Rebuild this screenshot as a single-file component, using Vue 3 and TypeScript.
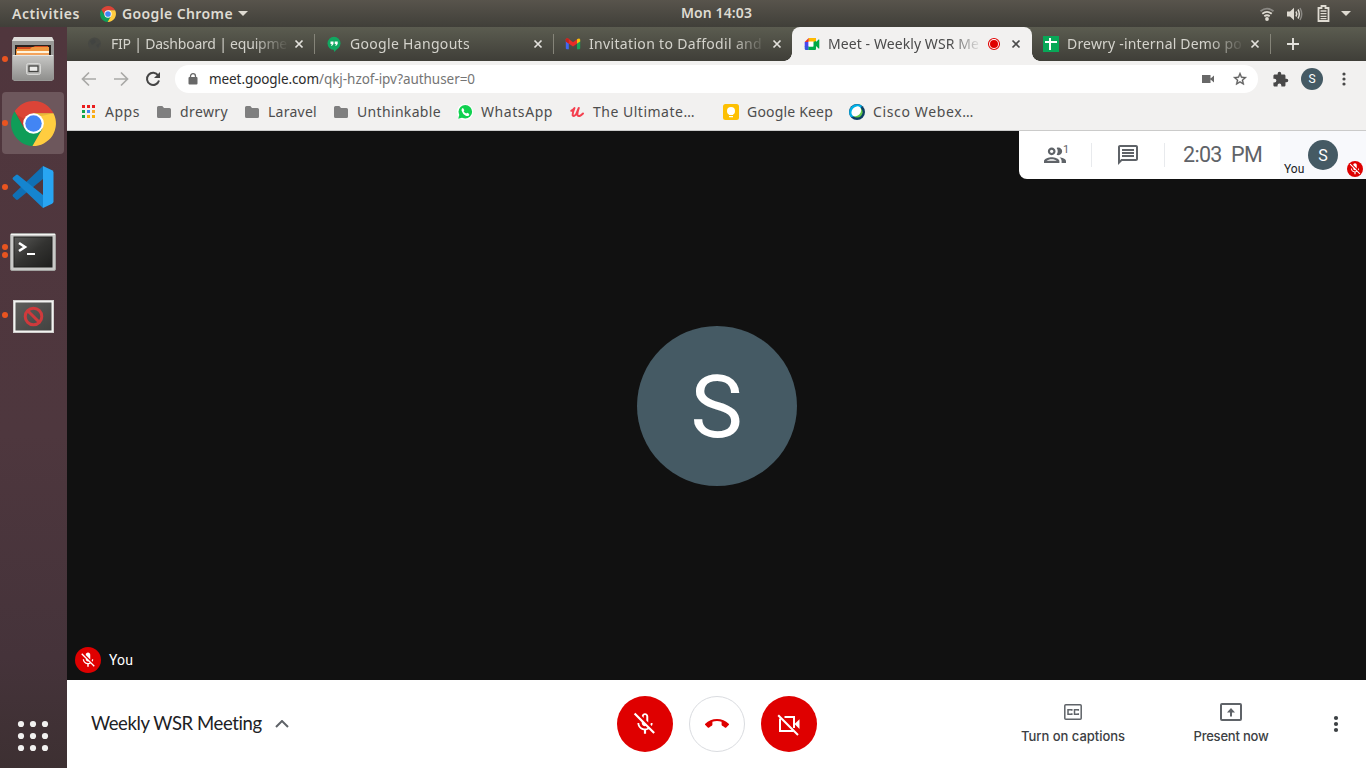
<script setup lang="ts">
import { ref } from 'vue'

interface Tab {
  icon: 'globe' | 'hangouts' | 'gmail' | 'meet' | 'sheets'
  title: string
  width: number
  active?: boolean
}
interface Bookmark {
  icon: 'apps' | 'folder' | 'whatsapp' | 'udemy' | 'keep' | 'webex'
  label: string
  width: number
  wide?: boolean
}

const tabs = ref<Tab[]>([
  { icon: 'globe', title: 'FIP | Dashboard | equipme', width: 176 },
  { icon: 'hangouts', title: 'Google Hangouts', width: 120 },
  { icon: 'gmail', title: 'Invitation to Daffodil and', width: 173 },
  { icon: 'meet', title: 'Meet - Weekly WSR Me', width: 151, active: true },
  { icon: 'sheets', title: 'Drewry -internal Demo po', width: 175 },
])

const bookmarks: Bookmark[] = [
  { icon: 'apps', label: 'Apps', width: 35 },
  { icon: 'folder', label: 'drewry', width: 48 },
  { icon: 'folder', label: 'Laravel', width: 49 },
  { icon: 'folder', label: 'Unthinkable', width: 84 },
  { icon: 'whatsapp', label: 'WhatsApp', width: 72 },
  { icon: 'udemy', label: 'The Ultimate…', width: 102, wide: true },
  { icon: 'keep', label: 'Google Keep', width: 86 },
  { icon: 'webex', label: 'Cisco Webex…', width: 101 },
]

const wedge = 'M24 13H45.3A24 24 0 0 0 3.82 11.05L14.47 29.5L24 24Z'
const appColors = ['#ea1d1d', '#ea1d1d', '#ea1d1d', '#12a54c', '#4285f4', '#f9a825', '#12a54c', '#f9b00a', '#f9b00a']
const micOff =
  'M19 11h-1.7c0 .74-.16 1.43-.43 2.05l1.23 1.23c.56-.98.9-2.09.9-3.28zm-4.02.17c0-.06.02-.11.02-.17V5c0-1.66-1.34-3-3-3S9 3.34 9 5v.18l5.98 5.99zM4.27 3L3 4.27l6.01 6.01V11c0 1.66 1.33 3 2.99 3 .22 0 .44-.03.65-.08l1.66 1.66c-.71.33-1.5.52-2.31.52-2.76 0-5.3-2.1-5.3-5.1H5c0 3.41 2.72 6.23 6 6.72V21h2v-3.28c.91-.13 1.77-.45 2.54-.9L19.73 21 21 19.73 4.27 3z'

// Tracks a label so that it fills the given width in pixels.
const vFit = {
  mounted(el: HTMLElement, binding: { value: number }) {
    const count = (el.textContent ?? '').length
    const natural = el.getBoundingClientRect().width
    el.style.letterSpacing = `${(binding.value - natural) / count}px`
  },
}
</script>

<template>
  <div class="desktop">
    <header class="topbar">
      <span v-fit="68" class="activities">Activities</span>
      <svg class="tb-chrome" width="16" height="16" viewBox="0 0 48 48">
        <path :d="wedge" fill="#db4437" />
        <path :d="wedge" fill="#0f9d58" transform="rotate(-120 24 24)" />
        <path :d="wedge" fill="#ffcd40" transform="rotate(120 24 24)" />
        <circle cx="24" cy="24" r="11" fill="#fff" />
        <circle cx="24" cy="24" r="8.5" fill="#4285f4" />
      </svg>
      <span v-fit="111">Google Chrome</span>
      <i class="caret app-caret"></i>
      <span class="clock"><span v-fit="71">Mon 14:03</span></span>
      <div class="tray">
        <svg width="16" height="16" viewBox="0 0 16 16" fill="none" stroke-width="1.8">
          <path d="M1.5 5.2Q8 .2 14.5 5.2" stroke="#8a8883" />
          <path d="M3.3 7.8Q8 4 12.7 7.8M5.3 10.3Q8 8.2 10.7 10.3" stroke="#dfdbd2" />
          <circle cx="8" cy="13" r="1.9" fill="#dfdbd2" />
        </svg>
        <svg class="sound" width="17" height="16" viewBox="0 0 17 16" fill="none" stroke-width="1.5">
          <path d="M1 5.5h3l4-3.8v12.6L4 10.500H1z" fill="#dfdbd2" />
          <path d="M10 5.5q1.5 2.5 0 5M12 3.5q2.600 4.5 0 9" stroke="#dfdbd2" />
          <path d="M14 2q3.400 6 0 12" stroke="#8a8883" />
        </svg>
        <svg class="battery" width="13" height="17" viewBox="0 0 13 17">
          <path d="M4.500 1h4v2H11.500v13h-10V3h3z" fill="none" stroke="#dfdbd2" stroke-width="1.8" />
          <path d="M3.500 6h6M3.500 8.700h6M3.500 11.300h6M3.500 13.700h6" stroke="#dfdbd2" stroke-width="1.3" />
        </svg>
        <i class="caret"></i>
      </div>
    </header>

    <div class="body">
      <aside class="dock">
        <div class="dock-item">
          <i class="run"></i>
          <svg width="44" height="46" viewBox="0 0 44 46">
            <defs>
              <linearGradient id="cab" x1="0" y1="0" x2="0" y2="1">
                <stop offset="0" stop-color="#c8c8c6" /><stop offset="1" stop-color="#8f8f8d" />
              </linearGradient>
            </defs>
            <path d="M3 1h38l2 4v38l-2 2H3l-2-2V5z" fill="#999997" />
            <path d="M3 1h38l2 4H1z" fill="#deddda" />
            <path d="M4 9h36v13H4z" fill="#29221e" />
            <path d="M6 11h16l2-1h13v10H6z" fill="#cf4b20" />
            <path d="M5 13h14l2-2h17v9H5z" fill="#ef9740" />
            <path d="M6 15h32v4H6z" fill="#fff3dc" />
            <path d="M6 17h32v3H6z" fill="#f3a35c" />
            <path d="M1.500 19h41v25h-41z" fill="url(#cab)" />
            <path d="M2 19.500h40" stroke="#e6e6e4" />
            <rect x="15.500" y="27.500" width="14" height="11" rx="2" fill="#b9b9b7" stroke="#d9d9d7" />
            <rect x="18" y="30" width="9" height="5.500" fill="#ececea" stroke="#454543" stroke-width="1.3" />
          </svg>
        </div>
        <div class="dock-item current">
          <i class="run"></i>
          <svg width="45" height="45" viewBox="0 0 48 48">
            <path :d="wedge" fill="#db4437" />
            <path :d="wedge" fill="#0f9d58" transform="rotate(-120 24 24)" />
            <path :d="wedge" fill="#ffcd40" transform="rotate(120 24 24)" />
            <path d="M24 13h21.300l-17 4z" fill="#d9a534" opacity=".5" />
            <path d="M5.500 14l8.500 15 1.500-9z" fill="#8e1f16" opacity=".25" />
            <circle cx="24" cy="24" r="11" fill="#fff" />
            <circle cx="24" cy="24" r="8.800" fill="#4285f4" />
          </svg>
        </div>
        <div class="dock-item">
          <i class="run"></i>
          <svg width="44" height="44" viewBox="0 0 44 44">
            <path d="M32 1v13L7 34.500q-1 .8-2 0L2 31.500q-1-1 0-2z" fill="#0f70b5" />
            <path d="M2 14.500q-1-1 0-2L5 10q1-.8 2 0l25 20v13z" fill="#1585cf" />
            <path d="M32 1l9 4.200q1.500.8 1.500 2.300v29q0 1.500-1.500 2.300L32 43z" fill="#28a5f2" />
          </svg>
        </div>
        <div class="dock-item">
          <i class="run pair upper"></i><i class="run pair lower"></i>
          <svg class="lower-icon" width="46" height="38" viewBox="0 0 46 38">
            <defs>
              <linearGradient id="scr" x1="0" y1="0" x2="1" y2="1">
                <stop offset="0" stop-color="#5a5a58" /><stop offset=".5" stop-color="#333331" /><stop offset="1" stop-color="#1e1e1d" />
              </linearGradient>
              <linearGradient id="scr2" x1="0" y1="0" x2="1" y2="1">
                <stop offset="0" stop-color="#5e5e5c" /><stop offset="1" stop-color="#424240" />
              </linearGradient>
            </defs>
            <rect x=".5" y=".5" width="45" height="37" rx="1.500" fill="#c9c9c7" stroke="#a2a2a0" />
            <path d="M1 1.500h44" stroke="#f5f5f3" />
            <rect x="4" y="4" width="38" height="30" fill="url(#scr)" stroke="#20201f" />
            <path d="M9 10l6 4-6 4" fill="none" stroke="#fff" stroke-width="2.600" />
            <path d="M17 21h8" stroke="#fff" stroke-width="2" />
          </svg>
        </div>
        <div class="dock-item">
          <i class="run"></i>
          <svg class="lower-icon" width="41" height="33" viewBox="0 0 41 33">
            <rect x=".5" y=".5" width="40" height="32" fill="#f3f3f1" stroke="#d0cfcd" />
            <rect x="2.500" y="2.500" width="36" height="28" fill="url(#scr2)" />
            <circle cx="20.500" cy="16.500" r="8.300" fill="none" stroke="#cf3a3c" stroke-width="3" />
            <path d="M14.700 10.700l11.600 11.600" stroke="#cf3a3c" stroke-width="3" />
          </svg>
        </div>
        <svg class="launcher" width="32" height="32" viewBox="0 0 32 32" fill="#f2f1f0">
          <template v-for="r in 3" :key="r">
            <circle v-for="c in 3" :key="c" :cx="c * 12 - 8" :cy="r * 12 - 8" r="3.100" />
          </template>
        </svg>
      </aside>

      <main class="window">
        <nav class="tabs">
          <div v-for="tab in tabs" :key="tab.title" class="tab" :class="{ active: tab.active }">
            <svg class="favicon" width="16" height="16" viewBox="0 0 16 16">
              <g v-if="tab.icon === 'globe'" fill="#474843"><circle cx="7.500" cy="8" r="6.500" /><path d="M3 5l4-2 2 3-4 3zM9 9l4-2-2 5z" fill="#424442" /></g>
              <g v-else-if="tab.icon === 'hangouts'">
                <circle cx="8" cy="7.300" r="6.500" fill="#11a861" /><path d="M7 12h4.500L8.500 16z" fill="#11a861" />
                <path d="M4.500 5.500h3v2.500L6 9.800H5l.8-1.800H4.500zM8.700 5.500h3v2.500l-1.500 1.800h-1L10 8H8.700z" fill="#fff" />
              </g>
              <g v-else-if="tab.icon === 'gmail'">
                <path d="M.8 4.500h3V13.300H1.800q-1 0-1-1z" fill="#4267f0" />
                <path d="M12 4.500h3.200V12.300q0 1-1 1H12z" fill="#16a65a" />
                <path d="M.8 3.300q.7-1.600 2.400-.7L8 6.300v4.200L.8 5.500z" fill="#e92c28" />
                <path d="M8 6.300L12.500 3v4.300L8 10.500z" fill="#e92c28" />
                <path d="M.8 5.500V3.500q.5-1.500 1.900-1.100L3.800 3.100v4.500z" fill="#c5221f" />
                <path d="M12 3.300q2.600-2 3.200.5v1.700L12 7.500z" fill="#f9bb0b" />
              </g>
              <g v-else-if="tab.icon === 'meet'">
                <path d="M4.500 2H12v4H4.500z" fill="#ffba00" /><path d="M.7 6l4-4v4z" fill="#e8372b" />
                <path d="M.7 6h4v4.500h-4z" fill="#4a45ee" /><path d="M.7 10h4v4H2q-1.300 0-1.300-1.300z" fill="#3656df" />
                <path d="M4.500 10.500h4.500V6l3-1v8q0 1-1 1H4.500z" fill="#00ac47" />
                <path d="M9 8l3-2 2.600-2.500q.7-.4.7.4v8.200q0 .8-.7.400L12 10z" fill="#00a843" />
                <path d="M4.500 5.500H9.500v5h-5z" fill="#fff" />
              </g>
              <g v-else><path d="M0 0h16v16H0z" fill="#08a858" /><path d="M2 6h12M7 2v12" stroke="#fff" stroke-width="2" /></g>
            </svg>
            <div class="title"><span v-fit="tab.width">{{ tab.title }}</span></div>
            <svg v-if="tab.active" class="recording" width="14" height="14" viewBox="0 0 14 14">
              <circle cx="7" cy="7" r="5.500" fill="#fff" stroke="#df0000" stroke-width="1.100" /><circle cx="7" cy="7" r="4" fill="#df0000" />
            </svg>
            <svg class="close" width="10" height="10" viewBox="0 0 10 10"><path d="M1.500 1.500l7 7M8.500 1.500l-7 7" stroke="currentColor" stroke-width="1.700" /></svg>
          </div>
          <svg class="plus" width="14" height="14" viewBox="0 0 14 14"><path d="M7 1v12M1 7h12" stroke="#e3e1dc" stroke-width="1.900" /></svg>
        </nav>

        <div class="toolbar">
          <div class="slot"><svg width="16" height="16" viewBox="0 0 16 16"><path d="M15 8H2M8 1.500L1.500 8 8 14.500" fill="none" stroke="#a9a9a7" stroke-width="1.700" /></svg></div>
          <div class="slot"><svg width="16" height="16" viewBox="0 0 16 16"><path d="M1 8h13M8 1.500L14.500 8 8 14.500" fill="none" stroke="#a9a9a7" stroke-width="1.700" /></svg></div>
          <div class="slot"><svg width="16" height="16" viewBox="0 0 16 16"><path d="M13.200 4.500A6.100 6.100 0 1 0 14 9.500" fill="none" stroke="#454545" stroke-width="2" /><path d="M15 1v6H9z" fill="#454545" /></svg></div>
          <div class="omnibox">
            <svg class="lock" width="10" height="12" viewBox="0 0 10 12"><rect x=".5" y="4" width="9" height="7.500" rx="1" fill="#686868" /><path d="M2.500 5V3.200a2.500 2.500 0 0 1 5 0V5" fill="none" stroke="#686868" stroke-width="1.300" /></svg>
            <span v-fit="110" class="host">meet.google.com</span><span v-fit="156" class="path">/qkj-hzof-ipv?authuser=0</span>
            <svg class="cam" width="14" height="10" viewBox="0 0 14 10"><path d="M1 1h8.500v8H1zM9 5l4-3.500v7z" fill="#686868" /></svg>
            <svg class="star" width="16" height="16" viewBox="0 0 24 24"><path d="M22 9.240l-7.190-.62L12 2 9.190 8.630 2 9.240l5.460 4.730L5.820 21 12 17.270 18.180 21l-1.630-7.030L22 9.240zM12 15.400l-3.760 2.270 1-4.280-3.320-2.880 4.380-.38L12 6.100l1.710 4.040 4.380.38-3.320 2.880 1 4.280L12 15.400z" fill="#5c5c5c" stroke="#5c5c5c" stroke-width=".5" /></svg>
          </div>
          <div class="slot ext"><svg width="17" height="17" viewBox="0 0 24 24"><path d="M20.500 11H19V7c0-1.100-.9-2-2-2h-4V3.500a2.500 2.500 0 0 0-5 0V5H4c-1.100 0-1.990.9-1.990 2v3.800H3.500a2.700 2.700 0 0 1 0 5.400H2V20c0 1.100.9 2 2 2h3.800v-1.500a2.700 2.700 0 0 1 5.400 0V22H17c1.100 0 2-.9 2-2v-4h1.500a2.500 2.500 0 0 0 0-5z" fill="#484848" /></svg></div>
          <div class="slot"><span class="profile">S</span></div>
          <div class="slot"><svg width="4" height="14" viewBox="0 0 4 14" fill="#484848"><circle cx="2" cy="2" r="1.600" /><circle cx="2" cy="7" r="1.600" /><circle cx="2" cy="12" r="1.600" /></svg></div>
        </div>

        <div class="bookmarks">
          <div v-for="b in bookmarks" :key="b.label" class="bookmark" :class="{ wide: b.wide }">
            <svg width="16" height="16" viewBox="0 0 16 16">
              <g v-if="b.icon === 'apps'">
                <rect v-for="(color, i) in appColors" :key="i" :x="1 + (i % 3) * 5" :y="1 + Math.floor(i / 3) * 5" width="3" height="3" :fill="color" />
              </g>
              <path v-else-if="b.icon === 'folder'" d="M1 3.500q0-1.500 1.500-1.500h3.800l1.700 2h5.500q1.500 0 1.500 1.500v7q0 1.500-1.500 1.500h-11Q1 14 1 12.500z" fill="#7f7f7f" />
              <g v-else-if="b.icon === 'whatsapp'">
                <circle cx="8" cy="8" r="8" fill="#fff" /><path d="M.8 15.200L2 11V5l7-2 2 10-7 1z" fill="#fff" /><circle cx="8.300" cy="7.800" r="6.800" fill="#10d14f" /><path d="M1.200 14.800L2.500 10l3.200 3.500z" fill="#10d14f" />
                <path d="M5 4.500l1-.5 1.400 2.200-.8 1q1 1.700 2.700 2.400l1-.9 2 1.200-.4 1.500q-1.500 1-3.500 0Q5.600 10 4.600 6.800q-.2-1.400.4-2.300z" fill="#fff" />
              </g>
              <path v-else-if="b.icon === 'udemy'" d="M2.300 6.800Q4 6.200 5.500 4Q3.500 9 3.700 11.300Q5 13 7.200 10.200L9.800 4Q8 9.500 8.500 11.300Q10 13.500 14 9.500" fill="none" stroke="#f4404f" stroke-width="2" stroke-linejoin="round" stroke-linecap="round" />
              <g v-else-if="b.icon === 'keep'"><rect width="16" height="16" rx="2.500" fill="#fdc003" /><circle cx="8" cy="7" r="4" fill="#fff" /><path d="M6 9h4v2H6zM6 12h4v1.200H6z" fill="#fff" /></g>
              <g v-else>
                <circle cx="8" cy="8" r="8" fill="#0c3f66" /><path d="M13 1.800A8 8 0 0 0 1.800 13Q8 14 13 1.800z" fill="#00b0e8" />
                <circle cx="8.200" cy="8.200" r="5.400" fill="#63c84a" /><ellipse cx="7.300" cy="7.300" rx="5.500" ry="4.300" transform="rotate(-48 7.300 7.300)" fill="#fff" />
              </g>
            </svg>
            <span v-fit="b.width">{{ b.label }}</span>
          </div>
        </div>

        <section class="call">
          <div class="status">
            <div class="people">
              <svg width="24" height="24" viewBox="0 0 24 24" fill="#5f6368"><g transform="translate(-1.2 -1) scale(1.1)"><path d="M9 13.750c-2.340 0-7 1.170-7 3.500V19h14v-1.750c0-2.330-4.660-3.500-7-3.500zM4.340 17c.84-.58 2.870-1.250 4.660-1.250s3.820.67 4.660 1.250H4.340zM9 12c1.930 0 3.500-1.570 3.500-3.500S10.930 5 9 5 5.500 6.570 5.500 8.500 7.070 12 9 12zm0-5c.83 0 1.500.67 1.500 1.500S9.830 10 9 10s-1.500-.67-1.500-1.500S8.170 7 9 7zm7.040 6.810c1.160.84 1.960 1.960 1.960 3.440V19h4v-1.750c0-2.020-3.500-3.170-5.960-3.440zM15 12c1.930 0 3.500-1.570 3.500-3.500S16.930 5 15 5c-.54 0-1.040.13-1.500.35.63.89 1 1.980 1 3.150s-.37 2.260-1 3.150c.46.22.96.35 1.500.35z" /></g></svg>
              <sup class="count">1</sup>
            </div>
            <div class="chat">
              <svg width="24" height="24" viewBox="0 0 24 24" fill="#5f6368"><path d="M4 4h16v12H5.170L4 17.170V4m0-2c-1.100 0-1.990.9-1.990 2L2 22l4-4h14c1.100 0 2-.9 2-2V4c0-1.100-.9-2-2-2H4z" /><path d="M6 12h12v2H6zM6 9h12v2H6zM6 6h12v2H6z" /></svg>
            </div>
            <div class="time"><span v-fit="79">2:03&nbsp; PM</span></div>
            <div class="self">
              <span class="self-name">You</span>
              <span class="self-avatar">S</span>
              <span class="self-muted"><svg width="14" height="14" viewBox="0 0 24 24" fill="#fff"><path :d="micOff" /></svg></span>
            </div>
          </div>
          <div class="avatar">S</div>
          <div class="participant">
            <span class="muted"><svg width="18" height="18" viewBox="0 0 24 24" fill="#fff"><path :d="micOff" /></svg></span>
            <span v-fit="24">You</span>
          </div>
        </section>

        <footer class="controls">
          <div class="meeting">
            <span v-fit="171">Weekly WSR Meeting</span>
            <svg width="14" height="8" viewBox="0 0 14 8"><path d="M1 7l6-6 6 6" fill="none" stroke="#5f6368" stroke-width="2" /></svg>
          </div>
          <div class="buttons">
            <button class="round"><svg width="26" height="26" viewBox="0 0 24 24" fill="#fff"><path d="M10.800 4.900c0-.66.54-1.200 1.200-1.200s1.200.54 1.200 1.200l-.01 3.910L15 10.600V5c0-1.660-1.340-3-3-3-1.540 0-2.790 1.160-2.960 2.650l1.760 1.760V4.900zM19 11h-1.700c0 .58-.1 1.130-.27 1.640l1.270 1.270c.44-.88.7-1.870.7-2.910zM3.100 1.600L1.700 3l7.300 7.300V11c0 1.660 1.340 3 3 3 .23 0 .44-.03.65-.08l1.660 1.660c-.71.33-1.500.52-2.310.52-2.760 0-5.300-2.100-5.300-5.100H5c0 3.410 2.720 6.230 6 6.720V21h2v-3.280c.91-.13 1.770-.45 2.550-.9l4.200 4.200 1.410-1.410L3.100 1.600z" /></svg></button>
            <button class="round hangup"><svg width="24" height="24" viewBox="0 0 24 24" fill="#df0000"><path d="M12 9c-1.600 0-3.150.25-4.600.72v3.100c0 .39-.23.74-.56.9-.98.49-1.870 1.120-2.660 1.850-.18.18-.43.28-.7.28-.28 0-.53-.11-.71-.29L.29 13.080c-.18-.17-.29-.42-.29-.7 0-.28.11-.53.29-.71C3.340 8.780 7.460 7 12 7s8.660 1.780 11.710 4.670c.18.18.29.43.29.71 0 .28-.11.53-.29.71l-2.480 2.480c-.18.18-.43.29-.71.29-.27 0-.52-.11-.7-.28-.79-.74-1.690-1.360-2.670-1.850-.33-.16-.56-.5-.56-.9v-3.100C15.150 9.250 13.600 9 12 9z" /></svg></button>
            <button class="round"><svg width="24" height="24" viewBox="0 0 24 24" fill="none" stroke="#fff" stroke-width="2"><path d="M3 6.500V19h13.500M7.500 5H17v11" /><path d="M17.500 12l5-4.700v9.600z" fill="#fff" stroke="none" /><path d="M1.200 3.200L21 23" /></svg></button>
          </div>
          <div class="actions">
            <div class="action captions">
              <svg width="24" height="24" viewBox="0 0 24 24" fill="none" stroke="#5f6368"><rect x="3.800" y="4.800" width="16.400" height="14.400" rx="1" stroke-width="1.500" /><path d="M10.800 10.700V9.700H7v4.600h3.800v-1M17.300 10.700V9.700h-3.800v4.600h3.800v-1" stroke-width="1.500" /></svg>
              <span v-fit="104">Turn on captions</span>
            </div>
            <div class="action present">
              <svg width="24" height="24" viewBox="0 0 24 24" fill="none" stroke="#5f6368" stroke-width="2"><rect x="2" y="4" width="20" height="16" rx="1" /><path d="M12 16.500V9.500" /><path d="M8 12.500L12 8l4 4.500z" fill="#5f6368" stroke="none" /></svg>
              <span v-fit="75">Present now</span>
            </div>
            <svg class="more" width="6" height="18" viewBox="0 0 6 18" fill="#3c4043"><circle cx="3" cy="3" r="2.100" /><circle cx="3" cy="9" r="2.100" /><circle cx="3" cy="15" r="2.100" /></svg>
          </div>
        </footer>
      </main>
    </div>
  </div>
</template>

<style>
html, body { margin: 0; overflow: hidden; }
</style>

<style scoped>
.desktop { width: 1366px; height: 768px; display: flex; flex-direction: column; font-family: "Noto Sans", "Open Sans", sans-serif; overflow: hidden; }
.desktop span { white-space: nowrap; }
svg { flex: none; display: block; }
.topbar { position: relative; height: 27px; flex: none; display: flex; align-items: center; padding: 0 15px 0 12px; box-sizing: border-box; background: linear-gradient(#58544c, #403f39); color: #dfdbd2; font-weight: 600; font-size: 14px; line-height: 26px; }
.tb-chrome { margin: 0 6px 0 20px; }
.caret { width: 0; height: 0; border: 5px solid transparent; border-top-color: #dfdbd2; border-bottom: 0; }
.app-caret { margin-left: 5px; }
.clock { position: absolute; left: 681px; top: 0; }
.tray { margin-left: auto; display: flex; align-items: center; }
.sound { margin-left: 11px; }
.battery { margin: 0 11px 0 14px; }
.body { flex: 1; display: flex; min-height: 0; }
.dock { width: 67px; flex: none; box-sizing: border-box; padding: 1px 3px 15px 2px; display: flex; flex-direction: column; gap: 2px; background: linear-gradient(#50363d, #4e373e 55%, #45333a 85%, #3d3032); }
.dock-item { position: relative; height: 62px; width: 62px; display: flex; align-items: center; justify-content: center; border-radius: 4px; }
.current { background: #6d575c; }
.run { position: absolute; left: 0; top: 28px; width: 6px; height: 6px; border-radius: 50%; background: #e95420; }
.upper { top: 24px; }
.lower { top: 32px; }
.lower-icon { margin-top: 2px; }
.launcher { margin: auto 0 1px 15px; }
.window { flex: 1; min-width: 0; display: flex; flex-direction: column; }
.tabs { height: 34px; flex: none; display: flex; align-items: center; padding-left: 8px; background: linear-gradient(#5b5c50, #3f3e38); color: #d4d3cc; font-size: 14px; }
.tab { position: relative; width: 239px; height: 34px; flex: none; box-sizing: border-box; padding: 0 10px 0 12px; display: flex; align-items: center; }
.tab::after { content: ""; position: absolute; right: -1px; top: 7px; width: 1px; height: 20px; background: #858479; }
.tab:nth-child(3)::after, .tab.active::after { display: none; }
.tab.active { width: 240px; margin-right: -1px; padding-right: 11px; background: #f2f1f0; color: #4b4b4b; border-radius: 8px 8px 0 0; z-index: 1; }
.active::before { content: ""; position: absolute; inset: auto -8px 0; height: 8px; background: radial-gradient(circle at 0 0, transparent 7.500px, #f2f1f0 8px) left / 8px 8px no-repeat, radial-gradient(circle at 100% 0, transparent 7.500px, #f2f1f0 8px) right / 8px 8px no-repeat; }
.favicon { margin-right: 8px; }
.title { width: 176px; overflow: hidden; line-height: 32px; margin-top: -1px; mask-image: linear-gradient(90deg, #000 142px, transparent 178px); }
.active .title { width: 153px; mask-image: linear-gradient(90deg, #000 122px, transparent 154px); }
.recording { margin-left: 6px; }
.close { margin-left: auto; color: #e3e1dc; }
.active .close { color: #4b4b4b; }
.plus { margin-left: 16px; }
.toolbar { height: 36px; flex: none; display: flex; align-items: center; padding: 0 6px; background: #f2f1f0; }
.slot { width: 32px; display: flex; justify-content: center; flex: none; }
.omnibox { flex: 1; height: 28px; margin: 0 6px 0 6px; padding: 0 10px 0 13px; border-radius: 14px; background: #fff; display: flex; align-items: center; font-size: 13.500px; line-height: 28px; }
.lock { margin-right: 11px; }
.host { color: #2c2c2c; }
.path { color: #757575; }
.cam { margin-left: auto; }
.star { margin-left: 17px; }
.profile { width: 22px; height: 22px; border-radius: 50%; background: #455a64; color: #fff; font: 12px/22px Roboto, sans-serif; text-align: center; }
.bookmarks { height: 33px; flex: none; padding: 0 14px 0; border-bottom: 1px solid #cbcbca; display: flex; align-items: center; gap: 16px; background: #f2f1f0; color: #4d4d4d; font-size: 14px; }
.bookmark { display: flex; align-items: center; gap: 8px; line-height: 20px; margin-top: -4px; }
.wide { margin-right: 12px; }
.call { position: relative; height: 549px; flex: none; background: #111; display: flex; align-items: center; justify-content: center; }
.avatar { width: 160px; height: 160px; border-radius: 50%; background: #455a64; color: #fff; text-align: center; font: 88px/161px Roboto, sans-serif; }
.status { position: absolute; right: 0; top: 0; width: 347px; height: 48px; display: flex; background: #fff; border-radius: 0 0 0 8px; color: #5f6368; font-family: Roboto, sans-serif; overflow: hidden; }
.people, .chat { position: relative; width: 73px; box-sizing: border-box; display: flex; align-items: center; justify-content: center; padding-right: 2px; }
.people::after, .chat::after { content: ""; position: absolute; right: 0; top: 12px; height: 24px; width: 1px; background: #e8eaed; }
.count { position: absolute; left: 44px; top: 12px; font-size: 11px; line-height: 13px; }
.time { width: 97px; padding-left: 18px; font-size: 21.500px; line-height: 48px; box-sizing: content-box; }
.self { position: relative; flex: 1; background: #f8f9fc; }
.self-name { position: absolute; left: 4px; top: 30px; font-size: 12px; line-height: 16px; color: #202124; }
.self-avatar { position: absolute; left: 28px; top: 9px; width: 30px; height: 30px; border-radius: 50%; background: #455a64; color: #fff; text-align: center; font-size: 16px; line-height: 31px; }
.self-muted { position: absolute; right: 3px; bottom: 2px; width: 16px; height: 16px; border-radius: 50%; background: #df0000; display: flex; align-items: center; justify-content: center; }
.participant { position: absolute; left: 8px; bottom: 7px; display: flex; align-items: center; gap: 8px; color: #fff; font: 14px/26px Roboto, sans-serif; }
.muted { width: 26px; height: 26px; border-radius: 50%; background: #df0000; display: flex; align-items: center; justify-content: center; }
.controls { flex: 1; background: #fff; display: grid; grid-template-columns: 550px 200px 1fr; align-items: center; color: #202124; font-family: Lato, Roboto, sans-serif; }
.meeting { display: flex; align-items: center; gap: 13px; padding-left: 24px; font-size: 18.500px; line-height: 24px; }
.meeting span { margin-top: -2px; }
.buttons { display: flex; gap: 16px; }
.round { width: 56px; height: 56px; padding: 0; border: 0; border-radius: 50%; background: #df0000; display: flex; align-items: center; justify-content: center; }
.hangup { background: #fff; border: 1px solid #dadce0; }
.actions { display: flex; align-items: center; padding-left: 204px; font: 500 13px/20px Inter, Roboto, sans-serif; color: #3c4043; }
.action { display: flex; flex-direction: column; align-items: center; gap: 2px; margin-top: -2px; }
.captions { width: 104px; }
.present { width: 76px; margin-left: 68px; }
.more { margin-left: 64px; }
</style>
